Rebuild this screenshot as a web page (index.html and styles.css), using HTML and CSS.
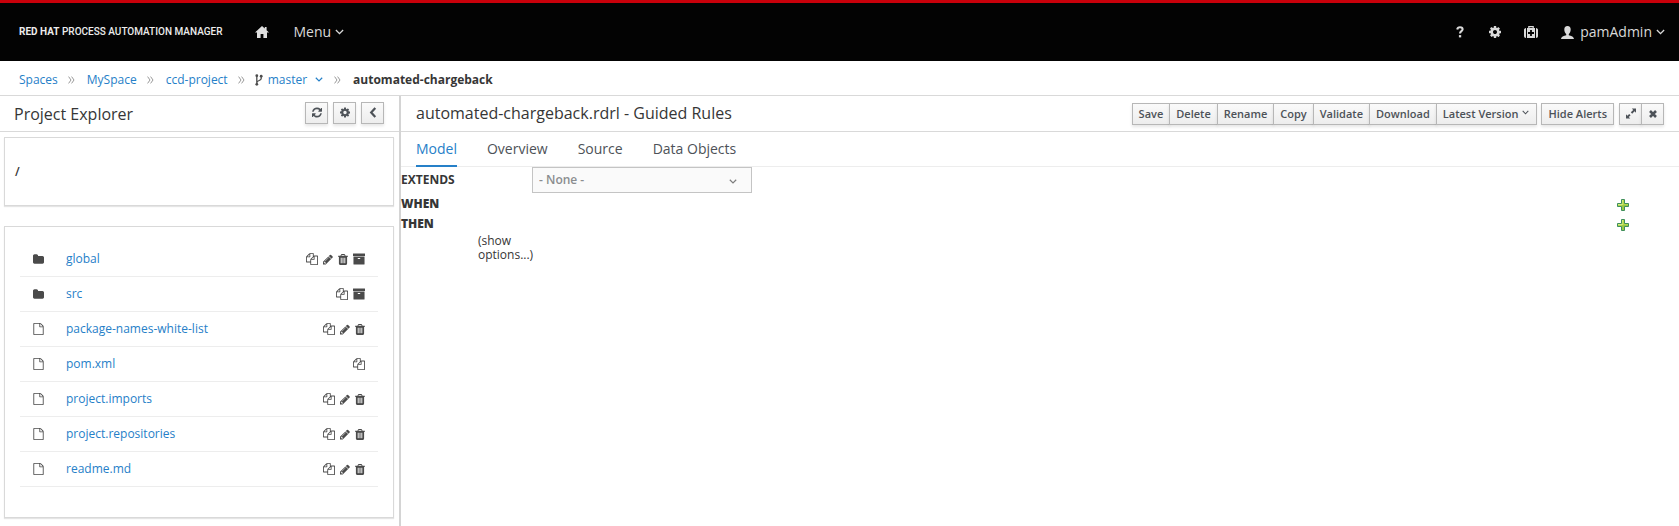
FILE: index.html
```html
<!DOCTYPE html>
<html lang="en">
<head>
<meta charset="utf-8">
<title>Process Automation Manager</title>
<link rel="stylesheet" href="styles.css">
</head>
<body>
<svg class="sprite" aria-hidden="true">
  <symbol id="copy" viewBox="0 0 1792 1792"><path d="M1696 384q40 0 68 28t28 68v1216q0 40-28 68t-68 28h-960q-40 0-68-28t-28-68v-288h-544q-40 0-68-28t-28-68v-672q0-40 20-88t48-76l408-408q28-28 76-48t88-20h416q40 0 68 28t28 68v328q68-40 128-40h416zm-544 213l-299 299h299v-299zm-640-384l-299 299h299v-299zm196 647l316-316v-416h-384v416q0 40-28 68t-68 28h-416v640h512v-256q0-40 20-88t48-76zm956 804v-1152h-384v416q0 40-28 68t-68 28h-416v640h896z"/></symbol>
  <symbol id="pencil" viewBox="128 128 1536 1536"><path d="M491 1536l91-91-235-235-91 91v107h128v128h107zm523-928q0-22-22-22-10 0-17 7l-542 542q-7 7-7 17 0 22 22 22 10 0 17-7l542-542q7-7 7-17zm-54-192l416 416-832 832h-416v-416zm683 96q0 53-37 90l-166 166-416-416 166-165q36-38 90-38 53 0 91 38l235 234q37 39 37 91z"/></symbol>
  <symbol id="trash" viewBox="192 128 1408 1536"><path d="M704 1376v-704q0-14-9-23t-23-9h-64q-14 0-23 9t-9 23v704q0 14 9 23t23 9h64q14 0 23-9t9-23zm256 0v-704q0-14-9-23t-23-9h-64q-14 0-23 9t-9 23v704q0 14 9 23t23 9h64q14 0 23-9t9-23zm256 0v-704q0-14-9-23t-23-9h-64q-14 0-23 9t-9 23v704q0 14 9 23t23 9h64q14 0 23-9t9-23zm-544-992h448l-48-117q-7-9-17-11h-317q-10 2-17 11zm928 32v64q0 14-9 23t-23 9h-96v948q0 83-47 143.5t-113 60.5h-832q-66 0-113-58.5t-47-141.5v-952h-96q-14 0-23-9t-9-23v-64q0-14 9-23t23-9h309l70-167q15-37 54-63t79-26h320q40 0 79 26t54 63l70 167h309q14 0 23 9t9 23z"/></symbol>
  <symbol id="archive" viewBox="64 96 1664 1600"><path d="M1088 832q0-26-19-45t-45-19h-256q-26 0-45 19t-19 45 19 45 45 19h256q26 0 45-19t19-45zm576-192v960q0 26-19 45t-45 19h-1408q-26 0-45-19t-19-45v-960q0-26 19-45t45-19h1408q26 0 45 19t19 45zm64-448v256q0 26-19 45t-45 19h-1536q-26 0-45-19t-19-45v-256q0-26 19-45t45-19h1536q26 0 45 19t19 45z"/></symbol>
  <symbol id="cog" viewBox="128 128 1536 1536"><path d="M1152 896q0-106-75-181t-181-75-181 75-75 181 75 181 181 75 181-75 75-181zm512-109v222q0 12-8 23t-20 13l-185 28q-19 54-39 91 35 50 107 138 10 12 10 25t-9 23q-27 37-99 108t-94 71q-12 0-26-9l-138-108q-44 23-91 38-16 136-29 186-7 28-36 28h-222q-14 0-24.5-8.5t-11.5-21.5l-28-184q-49-16-90-37l-141 107q-10 9-25 9-14 0-25-11-126-114-165-168-7-10-7-23 0-12 8-23 15-21 51-66.5t54-70.5q-27-50-41-99l-183-27q-13-2-21-12.5t-8-23.5v-222q0-12 8-23t19-13l186-28q14-46 39-92-40-57-107-138-10-12-10-24 0-10 9-23 26-36 98.5-107.5t94.5-71.5q13 0 26 10l138 107q44-23 91-38 16-136 29-186 7-28 36-28h222q14 0 24.5 8.5t11.5 21.5l28 184q49 16 90 37l142-107q9-9 24-9 13 0 25 10 129 119 165 170 7 8 7 22 0 12-8 23-15 21-51 66.5t-54 70.5q26 50 41 98l183 28q13 2 21 12.5t8 23.5z"/></symbol>
  <symbol id="refresh" viewBox="128 128 1536 1536"><path d="M1639 1056q0 5-1 7-64 268-268 434.5t-478 166.5q-146 0-282.5-55t-243.5-157l-129 129q-19 19-45 19t-45-19-19-45v-448q0-26 19-45t45-19h448q26 0 45 19t19 45-19 45l-137 137q71 66 161 102t187 36q134 0 250-65t186-179q11-17 53-117 8-23 30-23h192q13 0 22.5 9.5t9.5 22.5zm25-800v448q0 26-19 45t-45 19h-448q-26 0-45-19t-19-45 19-45l138-138q-148-137-349-137-134 0-250 65t-186 179q-11 17-53 117-8 23-30 23h-199q-13 0-22.5-9.5t-9.5-22.5v-7q65-268 270-434.5t480-166.5q146 0 284 55.5t245 156.5l130-129q19-19 45-19t45 19 19 45z"/></symbol>
  <symbol id="file" viewBox="128 0 1536 1792"><path d="M1596 380q28 28 48 76t20 88v1152q0 40-28 68t-68 28h-1344q-40 0-68-28t-28-68v-1600q0-40 28-68t68-28h896q40 0 88 20t76 48zm-444-244v376h376q-10-29-22-41l-313-313q-12-12-41-22zm384 1528v-1024h-416q-40 0-68-28t-28-68v-416h-768v1536h1280z"/></symbol>
  <symbol id="folder" viewBox="64 128 1664 1408"><path d="M1728 608v704q0 92-66 158t-158 66h-1216q-92 0-158-66t-66-158v-960q0-92 66-158t158-66h320q92 0 158 66t66 158v32h672q92 0 158 66t66 158z"/></symbol>
  <symbol id="home" viewBox="0 0 14 12"><path d="M7 0 0 6.600h2V12h3.600V8h2.800v4H12V6.600h2L11.600 4.300V1H9.800v1.600z"/></symbol>
  <symbol id="down" viewBox="0 0 10 6"><path d="M1 .8 5 4.800 9 .8" fill="none" stroke="currentColor" stroke-width="1.500"/></symbol>
  <symbol id="left" viewBox="0 0 8 12"><path d="M6.500 1 2 6l4.500 5" fill="none" stroke="currentColor" stroke-width="2.400"/></symbol>
  <symbol id="sep" viewBox="0 0 7 8"><path d="M.6.6 3 4 .6 7.400M3.600.6 6 4 3.600 7.400" fill="none" stroke="currentColor"/></symbol>
  <symbol id="branch" viewBox="0 0 8 12"><path d="M1.800 2v8M6.200 2.500v2C6.200 7 1.800 6 1.800 9" fill="none" stroke="currentColor" stroke-width="1.300"/><circle cx="1.800" cy="1.700" r="1.400"/><circle cx="6.200" cy="2.200" r="1.400"/><circle cx="1.800" cy="10.300" r="1.400"/></symbol>
  <symbol id="help" viewBox="0 0 8 12"><path d="M1.200 3.500C1.500 1.800 2.500 1.200 4 1.200c1.600 0 2.600.8 2.600 2.100C6.600 5.200 4 5.100 4 7.600" fill="none" stroke="currentColor" stroke-width="2.100"/><path d="M2.900 9.100h2.300v2.300H2.900z"/></symbol>
  <symbol id="kit" viewBox="0 0 14 12"><path d="M4.800 2V.7h4.400V2" fill="none" stroke="currentColor" stroke-width="1.200"/><path fill-rule="evenodd" d="M3 2h8v10H3zM6.100 4v2.100H4v1.800h2.100V10h1.800V7.900H10V6.100H7.900V4z"/><path d="M2 2.100v9.800C.7 11.800 0 11 0 9.900V4.100C0 3 .7 2.200 2 2.100zM12 2.100v9.800c1.300-.1 2-.9 2-2V4.100c0-1.100-.7-1.900-2-2z"/></symbol>
  <symbol id="user" viewBox="0 0 13 13"><path d="M6.500 0C4.300 0 3.300 1.500 3.300 3.500c0 2.200.9 3.600 1.900 4.500v1.200C3 10 .3 10.300 0 13h13c-.3-2.700-3-3-5.200-3.800V8c1-.9 1.900-2.300 1.900-4.500C9.700 1.500 8.700 0 6.500 0z"/></symbol>
  <symbol id="expand" viewBox="0 0 10 10"><path d="M5.800 0H10v4.200L8.600 2.800 6.200 5.200 4.800 3.800 7.200 1.400zM0 5.800V10h4.200L2.800 8.600 4.600 6.800 3.200 5.400 1.400 7.200z"/></symbol>
  <symbol id="close" viewBox="0 0 8 8"><path d="M1 1l6 6M7 1 1 7" stroke="currentColor" stroke-width="2.600"/></symbol>
  <symbol id="plus" viewBox="0 0 12 12"><path d="M4.500.5h3v4h4v3h-4v4h-3v-4h-4v-3h4z" fill="#b3d84c" stroke="#3f8f5c"/><path d="M5 6h6v1H7v4H5z" fill="#9ac945"/><path d="M5 1h1v4H1v1h5z" fill="#d5ec84"/></symbol>
</svg>

<header class="masthead">
  <a class="brand" href="#"><b>RED HAT</b> PROCESS AUTOMATION MANAGER</a>
  <a class="home" href="#" aria-label="Home"><svg class="i14"><use href="#home"/></svg></a>
  <button class="nav-button">Menu <svg class="chev"><use href="#down"/></svg></button>
  <nav class="tools" aria-label="Utilities">
    <button class="nav-button" aria-label="Help"><svg class="i12"><use href="#help"/></svg></button>
    <button class="nav-button" aria-label="Settings"><svg class="i12"><use href="#cog"/></svg></button>
    <button class="nav-button" aria-label="Administration"><svg class="i14"><use href="#kit"/></svg></button>
    <button class="nav-button user"><svg class="i13"><use href="#user"/></svg><span>pamAdmin</span> <svg class="chev"><use href="#down"/></svg></button>
  </nav>
</header>

<nav class="crumbs" aria-label="Breadcrumb">
  <a href="#">Spaces</a><svg class="sep"><use href="#sep"/></svg>
  <a href="#">MySpace</a><svg class="sep"><use href="#sep"/></svg>
  <a href="#">ccd-project</a><svg class="sep"><use href="#sep"/></svg>
  <svg class="branch"><use href="#branch"/></svg><a href="#">master<svg class="crumb-chev"><use href="#down"/></svg></a><svg class="sep"><use href="#sep"/></svg>
  <strong>automated-chargeback</strong>
</nav>

<div class="workspace">
  <aside class="explorer">
    <div class="explorer-head">
      <h2>Project Explorer</h2>
      <button class="btn icon-btn" aria-label="Refresh"><svg class="i10"><use href="#refresh"/></svg></button>
      <button class="btn icon-btn" aria-label="Customize view"><svg class="i10"><use href="#cog"/></svg></button>
      <button class="btn icon-btn" aria-label="Collapse"><svg class="i10"><use href="#left"/></svg></button>
    </div>
    <div class="panel path">/</div>
    <div class="panel files">
      <ul>
        <li><svg class="kind"><use href="#folder"/></svg><a href="#">global</a><button aria-label="Copy"><svg class="i12"><use href="#copy"/></svg></button><button aria-label="Rename"><svg class="i10"><use href="#pencil"/></svg></button><button aria-label="Delete"><svg class="i10"><use href="#trash"/></svg></button><button aria-label="Archive"><svg class="i12"><use href="#archive"/></svg></button></li>
        <li><svg class="kind"><use href="#folder"/></svg><a href="#">src</a><button aria-label="Copy"><svg class="i12"><use href="#copy"/></svg></button><button aria-label="Archive"><svg class="i12"><use href="#archive"/></svg></button></li>
        <li><svg class="kind"><use href="#file"/></svg><a href="#">package-names-white-list</a><button aria-label="Copy"><svg class="i12"><use href="#copy"/></svg></button><button aria-label="Rename"><svg class="i10"><use href="#pencil"/></svg></button><button aria-label="Delete"><svg class="i10"><use href="#trash"/></svg></button></li>
        <li><svg class="kind"><use href="#file"/></svg><a href="#">pom.xml</a><button aria-label="Copy"><svg class="i12"><use href="#copy"/></svg></button></li>
        <li><svg class="kind"><use href="#file"/></svg><a href="#">project.imports</a><button aria-label="Copy"><svg class="i12"><use href="#copy"/></svg></button><button aria-label="Rename"><svg class="i10"><use href="#pencil"/></svg></button><button aria-label="Delete"><svg class="i10"><use href="#trash"/></svg></button></li>
        <li><svg class="kind"><use href="#file"/></svg><a href="#">project.repositories</a><button aria-label="Copy"><svg class="i12"><use href="#copy"/></svg></button><button aria-label="Rename"><svg class="i10"><use href="#pencil"/></svg></button><button aria-label="Delete"><svg class="i10"><use href="#trash"/></svg></button></li>
        <li><svg class="kind"><use href="#file"/></svg><a href="#">readme.md</a><button aria-label="Copy"><svg class="i12"><use href="#copy"/></svg></button><button aria-label="Rename"><svg class="i10"><use href="#pencil"/></svg></button><button aria-label="Delete"><svg class="i10"><use href="#trash"/></svg></button></li>
      </ul>
    </div>
  </aside>

  <main class="editor">
    <div class="editor-head">
      <h1>automated-chargeback.rdrl - Guided Rules</h1>
      <div class="group">
        <button class="btn">Save</button><button class="btn">Delete</button><button class="btn">Rename</button><button class="btn">Copy</button><button class="btn">Validate</button><button class="btn">Download</button><button class="btn">Latest Version<svg class="btn-chev"><use href="#down"/></svg></button>
      </div>
      <div class="group alerts"><button class="btn">Hide Alerts</button></div>
      <div class="group"><button class="btn icon-btn" aria-label="Maximize"><svg class="i10"><use href="#expand"/></svg></button><button class="btn icon-btn" aria-label="Close"><svg class="i8"><use href="#close"/></svg></button></div>
    </div>
    <nav class="tabs" aria-label="Editor views">
      <a class="active" href="#">Model</a><a href="#">Overview</a><a href="#">Source</a><a href="#">Data Objects</a>
    </nav>
    <div class="rule">
      <div class="line extends">
        <label for="parent-rule">EXTENDS</label>
        <div class="select"><select id="parent-rule"><option>- None -</option></select><svg class="select-chev"><use href="#down"/></svg></div>
      </div>
      <div class="line"><b>WHEN</b><button aria-label="Add condition"><svg class="i12"><use href="#plus"/></svg></button></div>
      <div class="line"><b>THEN</b><button aria-label="Add action"><svg class="i12"><use href="#plus"/></svg></button></div>
      <div class="options">(show options...)</div>
    </div>
  </main>
</div>
</body>
</html>
```
FILE: styles.css
```css
* { box-sizing: border-box; }
body {
  margin: 0;
  min-height: 100vh;
  display: flex;
  flex-direction: column;
  background: #fff;
  color: #363636;
  font: 12px/20px "Open Sans", sans-serif;
}
svg { display: block; flex: none; fill: currentColor; }
button, select { font: inherit; color: inherit; }
button { margin: 0; padding: 0; border: 0; background: none; cursor: pointer; }
a { color: #2680c8; text-decoration: none; }
h1, h2 { margin: 0; font-weight: 400; font-size: 16px; line-height: 24px; }
.sprite { position: absolute; width: 0; height: 0; }
.i8 { width: 8px; height: 8px; }
.i10 { width: 10px; height: 11px; }
.i12 { width: 12px; height: 12px; }
.i13 { width: 13px; height: 13px; }
.i14 { width: 14px; height: 12px; }

/* Masthead */
.masthead {
  display: flex;
  align-items: center;
  height: 61px;
  padding: 0 14px 0 19px;
  border-top: 3px solid #c8000a;
  background: #030303;
  color: #d9d9d9;
}
.brand { color: #ececec; font: 500 10px/20px Roboto, sans-serif; white-space: nowrap; }
.home { margin: 0 24px 0 33px; color: #e0e0e0; }
.nav-button { display: flex; align-items: center; gap: 4px; font-size: 14px; }
.chev { width: 9px; height: 6px; }
.tools { display: flex; align-items: center; gap: 23px; margin-left: auto; }
.user span { margin-left: 2px; }

/* Breadcrumb */
.crumbs { display: flex; align-items: center; height: 35px; padding: 3px 19px 0; border-bottom: 1px solid #d9d9d9; }
.crumbs a { display: flex; align-items: center; }
.sep { width: 7px; height: 8px; margin: 0 12px 0 10px; color: #999; }
.branch { width: 8px; height: 12px; margin: 0 5px 0 -2px; color: #4d4d4d; }
.crumb-chev { width: 8px; height: 5px; margin: 0 1px 0 8px; }

/* Project explorer */
.workspace { flex: 1; display: flex; }
.explorer { flex: none; width: 401px; padding-bottom: 8px; display: flex; flex-direction: column; border-right: 2px solid #d4d4d4; }
.explorer-head { display: flex; align-items: center; gap: 5px; height: 36px; padding: 0 15px 2px 14px; border-bottom: 1px solid #d9d9d9; }
.explorer-head h2 { flex: 1; padding-top: 2px; }
.btn {
  height: 22px;
  padding: 0 6px;
  border: 1px solid #b7b7b7;
  background: linear-gradient(#fafafa, #ededed);
  box-shadow: 0 2px 3px rgba(3, 3, 3, .1);
  color: #4d5258;
  font-weight: 600;
  font-size: 11px;
  line-height: 20px;
  white-space: nowrap;
}
.icon-btn { width: 23px; display: flex; align-items: center; justify-content: center; }
.panel { margin: 5px 5px 0 4px; border: 1px solid #d9d9d9; box-shadow: 0 1px 1px rgba(3, 3, 3, .1); }
.path { padding: 24px 10px 23px; font-weight: 600; }
.files { flex: 1; margin-top: 20px; padding: 15px; }
.files ul { list-style: none; margin: 0; padding: 0; }
.files li { display: flex; align-items: center; gap: 5px; height: 35px; padding: 0 13px; border-bottom: 1px solid #ededed; color: #4a4a4a; }
.files a { flex: 1; margin-left: 17px; }
.kind { width: 11px; height: 12px; }

/* Editor */
.editor { flex: 1; min-width: 0; }
.editor-head { display: flex; align-items: center; height: 36px; padding: 0 15px; border-bottom: 1px solid #d9d9d9; }
.editor-head h1 { flex: 1; padding-bottom: 2px; }
.group { display: flex; }
.group .btn + .btn { margin-left: -1px; }
.alerts { margin: 0 5px 0 4px; }
.btn-chev { display: inline-block; width: 7px; height: 5px; margin: 0 1px 3px 4px; }
.tabs { display: flex; gap: 30px; padding: 0 15px; border-bottom: 1px solid #ededed; }
.tabs a { padding: 6px 0; margin-bottom: -1px; border-bottom: 2px solid transparent; color: #4d5258; font-size: 14px; line-height: 21px; }
.tabs .active { color: #2680c8; border-color: #2680c8; }
.line { display: flex; align-items: center; justify-content: space-between; height: 20px; padding-right: 50px; font-weight: 700; }
.line button { padding-top: 2px; }
.extends { height: 26px; margin-bottom: 1px; justify-content: flex-start; }
.extends label { width: 131px; }
.select { position: relative; width: 220px; }
.select select { display: block; width: 100%; height: 26px; padding: 0 6px; border: 1px solid #c4c4c4; border-radius: 0; background: #fafafa; color: #8b8d8f; font-weight: 600; appearance: none; }
.select-chev { position: absolute; right: 15px; top: 12px; width: 8px; height: 5px; color: #7d7d7d; pointer-events: none; }
.options { width: 54px; margin-left: 77px; line-height: 14px; }
```
